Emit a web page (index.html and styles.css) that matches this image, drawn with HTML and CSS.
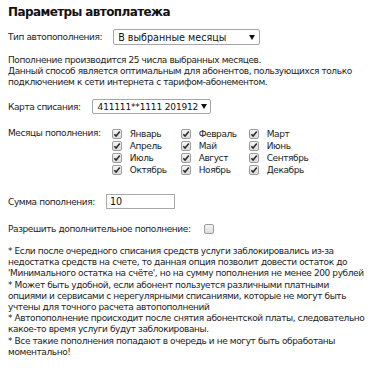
FILE: index.html
```html
<!DOCTYPE html>
<html lang="ru">
<head>
<meta charset="utf-8">
<title>Параметры автоплатежа</title>
<link rel="stylesheet" href="styles.css">
</head>
<body>
<div class="page">
  <h1 class="title">Параметры автоплатежа</h1>

  <div class="row row-type">
    <span class="label">Тип автопополнения:</span>
    <div class="select select-type">
      <span class="select-text">В выбранные месяцы</span>
      <svg class="arrow" width="6" height="5" viewBox="0 0 6 5"><polygon points="0,0 6,0 3,5" fill="#111"/></svg>
    </div>
  </div>

  <p class="info">Пополнение производится 25 числа выбранных месяцев.<br>Данный способ является оптимальным для абонентов, пользующихся только<br>подключением к сети интернета с тарифом-абонементом.</p>

  <div class="row row-card">
    <span class="label">Карта списания:</span>
    <div class="select select-card">
      <span class="select-text">411111**1111 201912</span>
      <svg class="arrow" width="6" height="5" viewBox="0 0 6 5"><polygon points="0,0 6,0 3,5" fill="#111"/></svg>
    </div>
  </div>

  <div class="row row-months">
    <span class="label">Месяцы пополнения:</span>
    <div class="months">
      <label class="month"><span class="cb cb-on"><svg width="8" height="8" viewBox="0 0 8 8"><path d="M1.3 4.2 L3.1 6.1 L6.8 1.6" fill="none" stroke="#2a2a2a" stroke-width="1.5"/></svg></span>Январь</label>
      <label class="month"><span class="cb cb-on"><svg width="8" height="8" viewBox="0 0 8 8"><path d="M1.3 4.2 L3.1 6.1 L6.8 1.6" fill="none" stroke="#2a2a2a" stroke-width="1.5"/></svg></span>Февраль</label>
      <label class="month"><span class="cb cb-on"><svg width="8" height="8" viewBox="0 0 8 8"><path d="M1.3 4.2 L3.1 6.1 L6.8 1.6" fill="none" stroke="#2a2a2a" stroke-width="1.5"/></svg></span>Март</label>
      <label class="month"><span class="cb cb-on"><svg width="8" height="8" viewBox="0 0 8 8"><path d="M1.3 4.2 L3.1 6.1 L6.8 1.6" fill="none" stroke="#2a2a2a" stroke-width="1.5"/></svg></span>Апрель</label>
      <label class="month"><span class="cb cb-on"><svg width="8" height="8" viewBox="0 0 8 8"><path d="M1.3 4.2 L3.1 6.1 L6.8 1.6" fill="none" stroke="#2a2a2a" stroke-width="1.5"/></svg></span>Май</label>
      <label class="month"><span class="cb cb-on"><svg width="8" height="8" viewBox="0 0 8 8"><path d="M1.3 4.2 L3.1 6.1 L6.8 1.6" fill="none" stroke="#2a2a2a" stroke-width="1.5"/></svg></span>Июнь</label>
      <label class="month"><span class="cb cb-on"><svg width="8" height="8" viewBox="0 0 8 8"><path d="M1.3 4.2 L3.1 6.1 L6.8 1.6" fill="none" stroke="#2a2a2a" stroke-width="1.5"/></svg></span>Июль</label>
      <label class="month"><span class="cb cb-on"><svg width="8" height="8" viewBox="0 0 8 8"><path d="M1.3 4.2 L3.1 6.1 L6.8 1.6" fill="none" stroke="#2a2a2a" stroke-width="1.5"/></svg></span>Август</label>
      <label class="month"><span class="cb cb-on"><svg width="8" height="8" viewBox="0 0 8 8"><path d="M1.3 4.2 L3.1 6.1 L6.8 1.6" fill="none" stroke="#2a2a2a" stroke-width="1.5"/></svg></span>Сентябрь</label>
      <label class="month"><span class="cb cb-on"><svg width="8" height="8" viewBox="0 0 8 8"><path d="M1.3 4.2 L3.1 6.1 L6.8 1.6" fill="none" stroke="#2a2a2a" stroke-width="1.5"/></svg></span>Октябрь</label>
      <label class="month"><span class="cb cb-on"><svg width="8" height="8" viewBox="0 0 8 8"><path d="M1.3 4.2 L3.1 6.1 L6.8 1.6" fill="none" stroke="#2a2a2a" stroke-width="1.5"/></svg></span>Ноябрь</label>
      <label class="month"><span class="cb cb-on"><svg width="8" height="8" viewBox="0 0 8 8"><path d="M1.3 4.2 L3.1 6.1 L6.8 1.6" fill="none" stroke="#2a2a2a" stroke-width="1.5"/></svg></span>Декабрь</label>
    </div>
  </div>

  <div class="row row-sum">
    <span class="label">Сумма пополнения:</span>
    <div class="input">10</div>
  </div>

  <div class="row row-allow">
    <span class="label">Разрешить дополнительное пополнение:</span>
    <span class="cb"></span>
  </div>

  <p class="notes">* Если после очередного списания средств услуги заблокировались из-за<br>недостатка средств на счете, то данная опция позволит довести остаток до<br>'Минимального остатка на счёте', но на сумму пополнения не менее 200 рублей<br>* Может быть удобной, если абонент пользуется различными платными<br>опциями и сервисами с нерегулярными списаниями, которые не могут быть<br>учтены для точного расчета автопополнений<br>* Автопополнение происходит после снятия абонентской платы, следовательно<br>какое-то время услуги будут заблокированы.<br>* Все такие пополнения попадают в очередь и не могут быть обработаны<br>моментально!</p>
</div>
</body>
</html>
```

FILE: styles.css
```css
html, body {
  margin: 0;
  padding: 0;
  background: #ffffff;
}

body {
  font-family: "DejaVu Sans", Verdana, sans-serif;
  font-size: 9px;
  letter-spacing: -0.4px;
  color: #1c1c1c;
}

.page {
  padding: 0 8px;
}

.title {
  margin: 5px 0 0;
  font-size: 12px;
  line-height: 14px;
  font-weight: bold;
  letter-spacing: -0.6px;
  color: #111;
}

.row {
  display: flex;
  align-items: center;
  gap: 11px;
}

.label {
  white-space: nowrap;
}

.row-type {
  margin-top: 10px;
}

.select {
  display: flex;
  align-items: center;
  justify-content: space-between;
  box-sizing: border-box;
  border: 1px solid #a6a6a6;
  border-radius: 2px;
  background: #fff;
  letter-spacing: 0;
  color: #111;
  white-space: nowrap;
}

.select-text {
  white-space: nowrap;
}

.select-type {
  width: 147px;
  height: 16px;
  padding: 0 4px 0 4px;
  font-size: 9.6px;
}

.select-card {
  width: 119px;
  height: 15px;
  padding: 0 3px 0 5px;
  font-size: 9px;
  letter-spacing: -0.15px;
}

.arrow {
  flex: none;
}

.info {
  margin: 10px 0 0;
  line-height: 11px;
  white-space: nowrap;
}

.row-card {
  margin-top: 11px;
}

.row-months {
  margin-top: 14px;
  align-items: flex-start;
}

.months {
  display: grid;
  grid-template-columns: 69px 68px auto;
  grid-auto-rows: 12px;
}

.month {
  display: flex;
  align-items: center;
  gap: 8px;
  white-space: nowrap;
}

.cb {
  box-sizing: border-box;
  width: 10px;
  height: 10px;
  flex: none;
  display: flex;
  align-items: center;
  justify-content: center;
  border: 1px solid #9c9c9c;
  border-radius: 2px;
  background: linear-gradient(#f4f4f4, #dcdcdc);
}

.row-sum {
  margin-top: 18px;
}

.input {
  box-sizing: border-box;
  width: 69px;
  height: 15px;
  padding: 0 3px;
  border: 1px solid #a9a9a9;
  font-size: 9.6px;
  line-height: 13px;
  letter-spacing: 0;
  color: #111;
}

.row-allow {
  margin-top: 14px;
  height: 12px;
  gap: 13px;
}

.notes {
  margin: 11px 0 0;
  line-height: 11.2px;
  white-space: nowrap;
}
```
